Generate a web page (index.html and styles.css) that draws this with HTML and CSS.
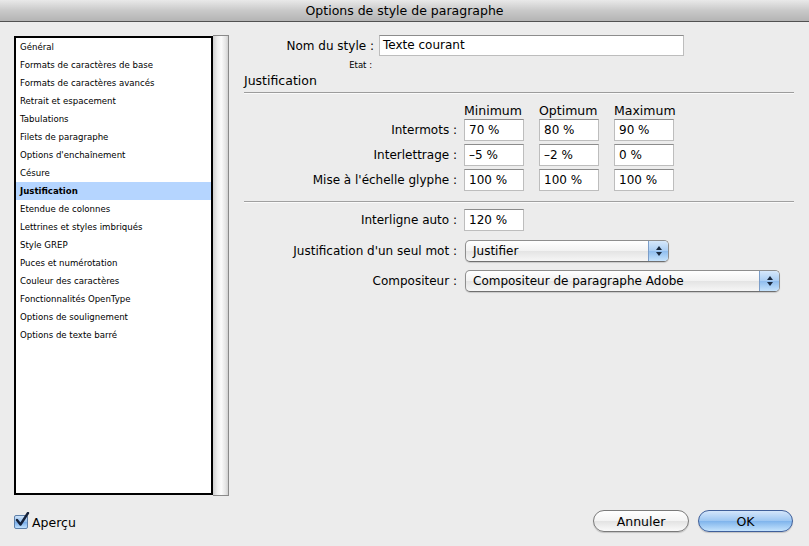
FILE: index.html
```html
<!DOCTYPE html>
<html lang="fr">
<head>
<meta charset="utf-8">
<title>Options de style de paragraphe</title>
<link rel="stylesheet" href="styles.css">
</head>
<body>
<div class="window">
  <div class="titlebar">Options de style de paragraphe</div>
  <div class="content">
    <div class="listbox">
      <ul class="list">
        <li>Général</li>
        <li>Formats de caractères de base</li>
        <li>Formats de caractères avancés</li>
        <li>Retrait et espacement</li>
        <li>Tabulations</li>
        <li>Filets de paragraphe</li>
        <li>Options d'enchaînement</li>
        <li>Césure</li>
        <li class="selected">Justification</li>
        <li>Etendue de colonnes</li>
        <li>Lettrines et styles imbriqués</li>
        <li>Style GREP</li>
        <li>Puces et numérotation</li>
        <li>Couleur des caractères</li>
        <li>Fonctionnalités OpenType</li>
        <li>Options de soulignement</li>
        <li>Options de texte barré</li>
      </ul>
      <div class="scrollbar"></div>
    </div>
    <div class="panel">
      <div class="name-row">
        <span class="name-label">Nom du style :</span>
        <div class="field name-field">Texte courant</div>
      </div>
      <div class="state-row"><span class="state-label">Etat :</span></div>
      <div class="section-title">Justification</div>
      <div class="grid">
        <span></span>
        <span class="colhead">Minimum</span>
        <span class="colhead">Optimum</span>
        <span class="colhead">Maximum</span>

        <span class="rlabel">Intermots :</span>
        <div class="field">70 %</div>
        <div class="field">80 %</div>
        <div class="field">90 %</div>

        <span class="rlabel">Interlettrage :</span>
        <div class="field">–5 %</div>
        <div class="field">–2 %</div>
        <div class="field">0 %</div>

        <span class="rlabel">Mise à l'échelle glyphe :</span>
        <div class="field">100 %</div>
        <div class="field">100 %</div>
        <div class="field">100 %</div>
      </div>
      <div class="separator"></div>
      <div class="form">
        <div class="frow">
          <span class="rlabel">Interligne auto :</span>
          <div class="field small-field">120 %</div>
        </div>
        <div class="frow">
          <span class="rlabel">Justification d'un seul mot :</span>
          <div class="popup popup-short">
            <span class="popup-text">Justifier</span>
            <span class="popup-arrows"><svg width="8" height="12" viewBox="0 0 8 12"><path d="M4 1 L7 5 L1 5 Z" fill="#1a2a40"/><path d="M4 11 L7 7 L1 7 Z" fill="#1a2a40"/></svg></span>
          </div>
        </div>
        <div class="frow">
          <span class="rlabel">Compositeur :</span>
          <div class="popup popup-long">
            <span class="popup-text">Compositeur de paragraphe Adobe</span>
            <span class="popup-arrows"><svg width="8" height="12" viewBox="0 0 8 12"><path d="M4 1 L7 5 L1 5 Z" fill="#1a2a40"/><path d="M4 11 L7 7 L1 7 Z" fill="#1a2a40"/></svg></span>
          </div>
        </div>
      </div>
    </div>
  </div>
  <div class="footer">
    <label class="check">
      <span class="checkbox"><svg width="16" height="16" viewBox="0 0 16 16"><path d="M3 8 L6.5 12.5 L14 1" fill="none" stroke="#15223a" stroke-width="2.4" stroke-linecap="round" stroke-linejoin="round"/></svg></span>
      <span class="check-text">Aperçu</span>
    </label>
    <div class="buttons">
      <button class="btn">Annuler</button>
      <button class="btn btn-default">OK</button>
    </div>
  </div>
</div>
</body>
</html>
```
FILE: styles.css
```css
* { box-sizing: border-box; }
html, body { margin: 0; padding: 0; }
body {
  width: 809px;
  height: 546px;
  background: #ececec;
  font-family: "DejaVu Sans", "Liberation Sans", sans-serif;
  font-size: 12px;
  color: #000;
  overflow: hidden;
}
.window { width: 809px; height: 546px; display: flex; flex-direction: column; }
.titlebar {
  height: 22px;
  line-height: 21px;
  text-align: center;
  font-size: 12.5px;
  background: linear-gradient(#e9e9e9, #c9c9c9 50%, #b4b4b4);
  border-bottom: 1px solid #515151;
}
.content {
  display: flex;
  padding: 13px 0 0 14px;
  height: 474px;
}
.listbox {
  width: 215px;
  height: 461px;
  display: flex;
}
.list {
  list-style: none;
  margin: 1px 0 1px 0;
  padding: 0;
  width: 199px;
  background: #fff;
  border: 2px solid #000;
}
.list li {
  height: 18px;
  line-height: 18px;
  padding-left: 4px;
  font-size: 8.6px;
  white-space: nowrap;
}
.list li.selected {
  background: #b5d5ff;
  font-weight: bold;
}
.scrollbar {
  width: 16px;
  border-top: 1px solid #8a8a8a;
  border-right: 1px solid #8a8a8a;
  border-bottom: 1px solid #8a8a8a;
  background: linear-gradient(to right, #cfcfcf, #efefef 30%, #fbfbfb 55%, #e4e4e4 85%, #d0d0d0);
}
.panel {
  margin-left: 15px;
  width: 550px;
  display: flex;
  flex-direction: column;
}
.name-row { display: flex; align-items: center; }
.name-label { width: 130px; text-align: right; margin-right: 5px; }
.field {
  height: 22px;
  line-height: 20px;
  background: #fff;
  border: 1px solid #bdbdbd;
  border-top-color: #8c8c8c;
  padding-left: 4px;
  white-space: nowrap;
}
.name-field { width: 305px; height: 21px; line-height: 19px; padding-left: 3px; }
.state-row { height: 17px; display: flex; align-items: center; }
.state-label { width: 128px; text-align: right; font-size: 8.5px; }
.section-title {
  height: 20px;
  line-height: 16px;
  border-bottom: 1px solid #9c9c9c;
  box-shadow: 0 1px 0 #fafafa;
  font-size: 12.5px;
}
.grid {
  display: grid;
  grid-template-columns: 220px 75px 75px 60px;
  row-gap: 3px;
  margin-top: 11px;
}
.grid .field { width: 60px; }
.colhead { height: 15px; line-height: 14px; font-size: 12.5px; margin-bottom: -3px; }
.rlabel { text-align: right; line-height: 22px; white-space: nowrap; }
.grid .rlabel { padding-right: 7px; }
.separator {
  margin-top: 10px;
  height: 0;
  border-top: 1px solid #a0a0a0;
  box-shadow: 0 1px 0 #fafafa;
}
.form { display: flex; flex-direction: column; margin-top: 7px; }
.frow { display: flex; align-items: center; height: 22px; margin-bottom: 8px; }
.frow:first-child { margin-bottom: 9px; }
.frow .rlabel { width: 213px; margin-right: 7px; }
.small-field { width: 60px; }
.popup {
  height: 22px;
  display: flex;
  align-items: center;
  border: 1px solid #8e8e8e;
  border-bottom-color: #6f6f6f;
  border-radius: 5px;
  background: linear-gradient(#ffffff, #f2f2f2 50%, #e4e4e4 51%, #f6f6f6);
  box-shadow: 0 1px 1px rgba(0,0,0,0.15);
  overflow: hidden;
  margin-left: 1px;
}
.popup-short { width: 204px; }
.popup-long { width: 315px; }
.popup-text { flex: 1; padding-left: 7px; white-space: nowrap; }
.popup-arrows {
  width: 20px;
  height: 100%;
  display: flex;
  align-items: center;
  justify-content: center;
  border-left: 1px solid #7b9dc8;
  background: linear-gradient(#d6e8fb, #a9cdf3 50%, #8fbdee 51%, #c6e3fc);
}
.footer {
  display: flex;
  justify-content: space-between;
  align-items: center;
  padding: 0 16px 0 14px;
  height: 50px;
}
.check { display: flex; align-items: center; margin-top: 2px; }
.checkbox {
  position: relative;
  width: 14px;
  height: 14px;
  border: 1px solid #5d7fa8;
  border-radius: 2px;
  background: linear-gradient(#cfe4fb, #8fbcec 50%, #77acea 51%, #bfe0fd);
}
.checkbox svg { position: absolute; left: -1px; top: -4px; }
.check-text { margin-left: 4px; font-size: 12.5px; }
.buttons { display: flex; gap: 9px; }
.btn {
  font-family: "DejaVu Sans", "Liberation Sans", sans-serif;
  font-size: 12.5px;
  height: 22px;
  width: 96px;
  padding: 0;
  border-radius: 11px;
  border: 1px solid #7a7a7a;
  background: linear-gradient(#ffffff, #f3f3f3 50%, #e3e3e3 51%, #fafafa);
  box-shadow: 0 1px 1px rgba(0,0,0,0.18);
  color: #000;
}
.btn-default {
  width: 95px;
  border-color: #3f5f9a;
  background: linear-gradient(#d4e6fb, #9cc6f2 50%, #7fb4ec 51%, #c4e3fd);
}
```
